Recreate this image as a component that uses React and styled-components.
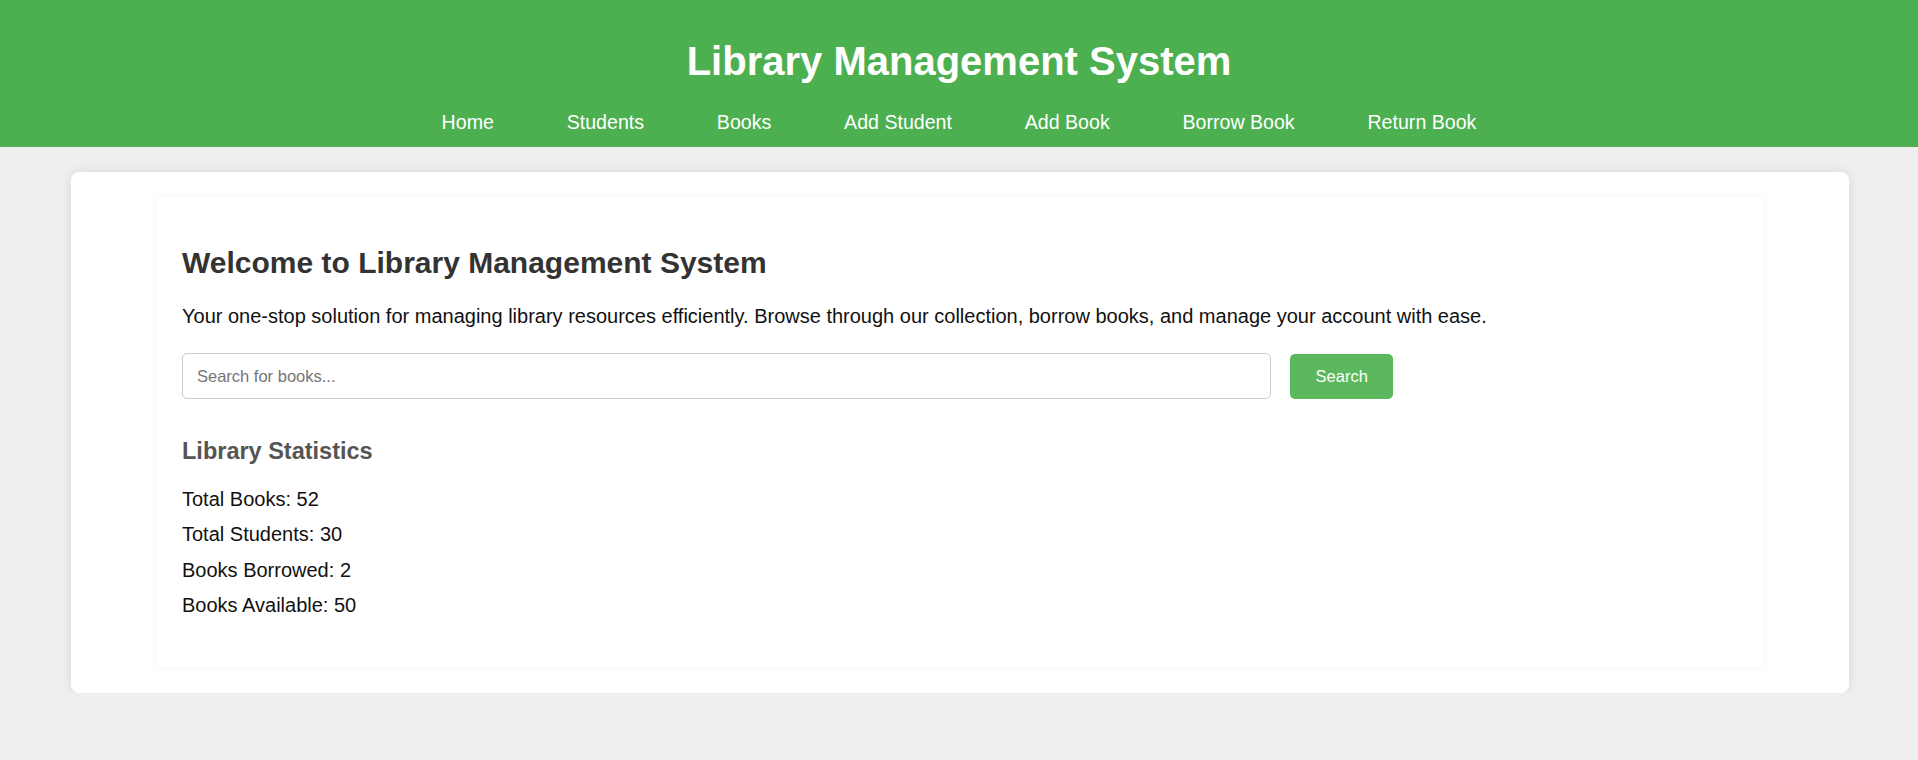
import React from "react";
import styled, { createGlobalStyle } from "styled-components";

const GlobalStyle = createGlobalStyle`
  html, body {
    margin: 0;
    padding: 0;
    background: #efefef;
    font-family: "Liberation Sans", Arial, sans-serif;
    color: #000;
  }
  * { box-sizing: border-box; }
`;

const Header = styled.header`
  background: #4caf50;
  color: #fff;
  padding: 39px 0 13px;
  text-align: center;
`;

const SiteTitle = styled.h1`
  margin: 0 0 27px;
  font-size: 40px;
  font-weight: bold;
  line-height: normal;
`;

const Nav = styled.nav`
  display: flex;
  justify-content: center;
  gap: 72.8px;
`;

const NavLink = styled.a`
  color: #fff;
  text-decoration: none;
  font-size: 19.6px;
  line-height: normal;
  cursor: pointer;
`;

const Outer = styled.main`
  margin: 25px 69px 0 71px;
  background: #fff;
  border-radius: 8px;
  box-shadow: 0 0 12px rgba(0, 0, 0, 0.1);
  padding: 25px 86px 26px;
`;

const Card = styled.section`
  background: #fff;
  box-shadow: 0 0 10px rgba(0, 0, 0, 0.06);
  padding: 25px;
  display: flow-root;
`;

const Welcome = styled.h2`
  margin: 24.4px 0 24.9px;
  font-size: 30px;
  font-weight: bold;
  color: #333;
  line-height: normal;
`;

const Intro = styled.p`
  margin: 0 0 25px;
  font-size: 20px;
  line-height: normal;
  color: #111;
`;

const SearchRow = styled.form`
  display: flex;
  align-items: center;
  gap: 19px;
`;

const SearchInput = styled.input`
  width: 70%;
  height: 46px;
  padding: 0 14px;
  border: 1px solid #ccc;
  border-radius: 5px;
  font-family: inherit;
  font-size: 16.5px;
  color: #333;
  outline: none;
  &::placeholder {
    color: #757575;
  }
`;

const SearchButton = styled.button`
  width: 103px;
  height: 45px;
  border: none;
  border-radius: 5px;
  background: #5cb85c;
  color: #fff;
  font-family: inherit;
  font-size: 16.5px;
  cursor: pointer;
`;

const StatsTitle = styled.h3`
  margin: 38.4px 0 23.2px;
  font-size: 23.5px;
  font-weight: bold;
  color: #555;
  line-height: normal;
`;

const StatList = styled.div`
  display: flex;
  flex-direction: column;
  gap: 12.5px;
  margin-bottom: 24.5px;
`;

const Stat = styled.p`
  margin: 0;
  font-size: 20px;
  line-height: normal;
  color: #111;
`;

const links = [
  "Home",
  "Students",
  "Books",
  "Add Student",
  "Add Book",
  "Borrow Book",
  "Return Book",
];

const stats = [
  ["Total Books", 52],
  ["Total Students", 30],
  ["Books Borrowed", 2],
  ["Books Available", 50],
];

export default function App() {
  return (
    <>
      <GlobalStyle />
      <Header>
        <SiteTitle>Library Management System</SiteTitle>
        <Nav>
          {links.map((l) => (
            <NavLink key={l}>{l}</NavLink>
          ))}
        </Nav>
      </Header>
      <Outer>
        <Card>
          <Welcome>Welcome to Library Management System</Welcome>
          <Intro>
            Your one-stop solution for managing library resources efficiently.
            Browse through our collection, borrow books, and manage your account
            with ease.
          </Intro>
          <SearchRow onSubmit={(e) => e.preventDefault()}>
            <SearchInput type="text" placeholder="Search for books..." />
            <SearchButton type="submit">Search</SearchButton>
          </SearchRow>
          <StatsTitle>Library Statistics</StatsTitle>
          <StatList>
            {stats.map(([k, v]) => (
              <Stat key={k}>
                {k}: {v}
              </Stat>
            ))}
          </StatList>
        </Card>
      </Outer>
    </>
  );
}
